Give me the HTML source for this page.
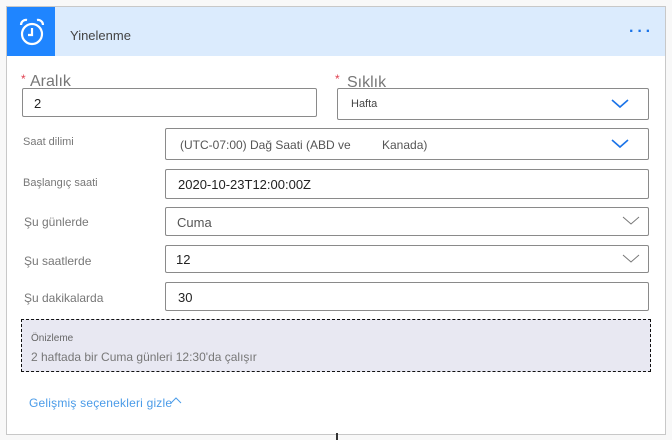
<!DOCTYPE html>
<html><head><meta charset="utf-8"><style>
*{box-sizing:border-box;margin:0;padding:0}
body{width:672px;height:440px;background:#f8f8f8;font-family:"Liberation Sans",sans-serif;position:relative;overflow:hidden}
.card{position:absolute;left:6px;top:6px;width:660px;height:429px;background:#fff;border:1px solid #c8c8c8}
.hdr{position:absolute;left:7px;top:7px;width:658px;height:49px;background:#dbebfd}
.ico{position:absolute;left:7px;top:7px;width:48px;height:49px;background:#1f85ff}
.a{position:absolute}
.box{position:absolute;border:1px solid #8a8a8a;background:#fff;border-radius:2px}
.lbl{position:absolute;font-size:12px;color:#777}
.txt{position:absolute;font-size:13px;color:#222}
.star{position:absolute;color:#e04050;font-size:12px}
</style></head><body>
<div class="card"></div>
<div class="hdr"></div>
<div class="ico"><svg width="48" height="49" viewBox="0 0 48 49"><g fill="none" stroke="#fff" stroke-width="2.2"><circle cx="25" cy="27" r="10"/><path d="M25 21v7h-4"/><path d="M14 18a5 5 0 0 1 6-5M36 18a5 5 0 0 0-6-5"/></g></svg></div>
<div class="a" style="left:70px;top:28px;font-size:13px;color:#444">Yinelenme</div>
<div class="a" style="left:629px;top:23px;color:#1a73e8;font-size:16px;letter-spacing:3px;font-weight:bold">···</div>

<span class="star" style="left:21px;top:72px">*</span>
<div class="a" style="left:30px;top:73px;font-size:16px;color:#777">Aralık</div>
<div class="box" style="left:22px;top:88px;width:295px;height:29px"></div>
<div class="txt" style="left:34px;top:96px">2</div>

<span class="star" style="left:335px;top:72px">*</span>
<div class="a" style="left:347px;top:74px;font-size:16px;color:#777">Sıklık</div>
<div class="box" style="left:337px;top:88px;width:312px;height:32px"></div>
<div class="a" style="left:351px;top:98px;font-size:11px;color:#444">Hafta</div>

<div class="lbl" style="left:23px;top:136px;font-size:11px">Saat dilimi</div>
<div class="box" style="left:165px;top:128px;width:484px;height:32px"></div>
<div class="a" style="left:180px;top:138px;font-size:12px;color:#555">(UTC-07:00) Dağ Saati (ABD ve</div>
<div class="a" style="left:382px;top:138px;font-size:12px;color:#555">Kanada)</div>

<div class="lbl" style="left:23px;top:177px;font-size:11px">Başlangıç saati</div>
<div class="box" style="left:165px;top:169px;width:484px;height:30px"></div>
<div class="txt" style="left:178px;top:177px">2020-10-23T12:00:00Z</div>

<div class="lbl" style="left:24px;top:215px">Şu günlerde</div>
<div class="box" style="left:165px;top:207px;width:484px;height:29px"></div>
<div class="txt" style="left:177px;top:215px;color:#555">Cuma</div>

<div class="lbl" style="left:24px;top:254px">Şu saatlerde</div>
<div class="box" style="left:165px;top:245px;width:484px;height:28px"></div>
<div class="txt" style="left:176px;top:252px">12</div>

<div class="lbl" style="left:24px;top:291px">Şu dakikalarda</div>
<div class="box" style="left:165px;top:282px;width:484px;height:29px"></div>
<div class="txt" style="left:178px;top:290px">30</div>

<svg class="a" style="left:0;top:0" width="672" height="440"><g fill="none" stroke="#1a73e8" stroke-width="1.6"><path d="M612 100l8 7 8-7"/><path d="M612 140l8 7 8-7"/></g><g fill="none" stroke="#777" stroke-width="1"><path d="M623 217l8 7 8-7"/><path d="M623 255l8 7 8-7"/></g><path d="M171 403l5-5 5 5" fill="none" stroke="#4a9be8" stroke-width="1"/><rect x="336" y="433" width="2" height="7" fill="#333"/></svg>

<div class="a" style="left:21px;top:319px;width:630px;height:53px;background:#e8e8f2;border:1px dashed #111"></div>
<div class="a" style="left:31px;top:333px;font-size:10px;color:#666">Önizleme</div>
<div class="a" style="left:31px;top:350px;font-size:12px;color:#777">2 haftada bir Cuma günleri 12:30'da çalışır</div>

<div class="a" style="left:29px;top:396px;font-size:12px;color:#4a9be8;letter-spacing:0.2px">Gelişmiş seçenekleri gizle</div>
</body></html>
